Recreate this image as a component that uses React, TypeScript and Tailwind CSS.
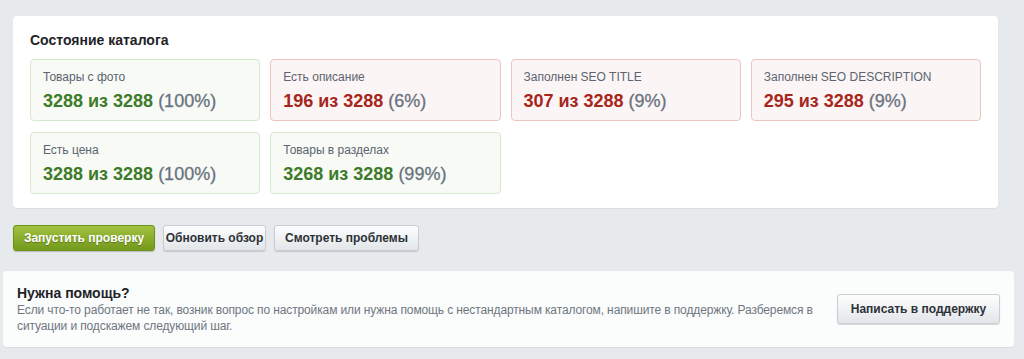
import React from "react";

type Tile = { label: string; value: string; pct: string; ok: boolean };

const tiles: Tile[] = [
  { label: "Товары с фото", value: "3288 из 3288", pct: "(100%)", ok: true },
  { label: "Есть описание", value: "196 из 3288", pct: "(6%)", ok: false },
  { label: "Заполнен SEO TITLE", value: "307 из 3288", pct: "(9%)", ok: false },
  { label: "Заполнен SEO DESCRIPTION", value: "295 из 3288", pct: "(9%)", ok: false },
  { label: "Есть цена", value: "3288 из 3288", pct: "(100%)", ok: true },
  { label: "Товары в разделах", value: "3268 из 3288", pct: "(99%)", ok: true },
];

export default function App() {
  return (
    <div className="min-h-[359px] bg-[#e6eaed] pt-4 font-['Liberation_Sans',Arial,sans-serif] text-[#222]">
      <div className="ml-[13px] mr-[26px] rounded-[4px] bg-white px-[17px] pt-[15px] pb-[14px] shadow-[0_1px_1px_rgba(0,0,0,0.06)]">
        <h2 className="mb-[10px] text-[14px] font-bold leading-[18px] text-[#1f2329]">Состояние каталога</h2>
        <div className="grid grid-cols-4 gap-x-[10px] gap-y-[11px]">
          {tiles.map((t) => (
            <div
              key={t.label}
              className={
                t.ok
                  ? "h-[62px] rounded-[4px] border border-[#d6e8cd] bg-[#f7faf5] px-[12px] pt-[9px]"
                  : "h-[62px] rounded-[4px] border border-[#ecc4c1] bg-[#fcf5f5] px-[12px] pt-[9px]"
              }
            >
              <div className="text-[12px] leading-[16px] text-[#5b6470]">{t.label}</div>
              <div className="mt-[5px] whitespace-nowrap text-[18px] leading-[22px]">
                <span className={t.ok ? "font-bold text-[#3d7a29]" : "font-bold text-[#a6261b]"}>{t.value}</span>{" "}
                <span className="text-[#69737f] [-webkit-text-stroke:0.3px_#69737f]">{t.pct}</span>
              </div>
            </div>
          ))}
        </div>
      </div>

      <div className="ml-[13px] mt-[17px] flex gap-[8px]">
        <button className="h-[26px] w-[142px] rounded-[3px] border border-[#6f9119] bg-gradient-to-b from-[#a2c23f] to-[#74991b] text-[12px] font-bold text-white shadow-[0_1px_1px_rgba(0,0,0,0.2)] [text-shadow:0_1px_1px_rgba(0,0,0,0.3)]">
          Запустить проверку
        </button>
        <button className="h-[26px] w-[103px] rounded-[3px] border border-[#c8ced3] bg-gradient-to-b from-[#fdfdfd] to-[#e2e6e9] text-[12px] font-bold text-[#2d3238] shadow-[0_1px_1px_rgba(0,0,0,0.15)]">
          Обновить обзор
        </button>
        <button className="h-[26px] w-[145px] rounded-[3px] border border-[#c8ced3] bg-gradient-to-b from-[#fdfdfd] to-[#e2e6e9] text-[12px] font-bold text-[#2d3238] shadow-[0_1px_1px_rgba(0,0,0,0.15)]">
          Смотреть проблемы
        </button>
      </div>

      <div className="ml-[3px] mr-[10px] mt-[20px] flex h-[76px] items-center gap-[16px] rounded-[4px] bg-[#fbfcfc] pl-[14px] pr-[14px] shadow-[0_1px_1px_rgba(0,0,0,0.05)]">
        <div className="min-w-0 flex-1">
          <div className="text-[14px] font-bold leading-[18px] text-[#1f2329]">Нужна помощь?</div>
          <p className="text-[12px] leading-[16px] tracking-[-0.12px] text-[#6e7780]">
            <span className="whitespace-nowrap">
              Если что-то работает не так, возник вопрос по настройкам или нужна помощь с нестандартным каталогом, напишите в поддержку. Разберемся в
            </span>
            <br />
            ситуации и подскажем следующий шаг.
          </p>
        </div>
        <button className="h-[30px] w-[163px] shrink-0 rounded-[3px] border border-[#c8ced3] bg-gradient-to-b from-[#fdfdfd] to-[#e2e6e9] text-[12px] font-bold text-[#2d3238] shadow-[0_1px_1px_rgba(0,0,0,0.15)]">
          Написать в поддержку
        </button>
      </div>
    </div>
  );
}
